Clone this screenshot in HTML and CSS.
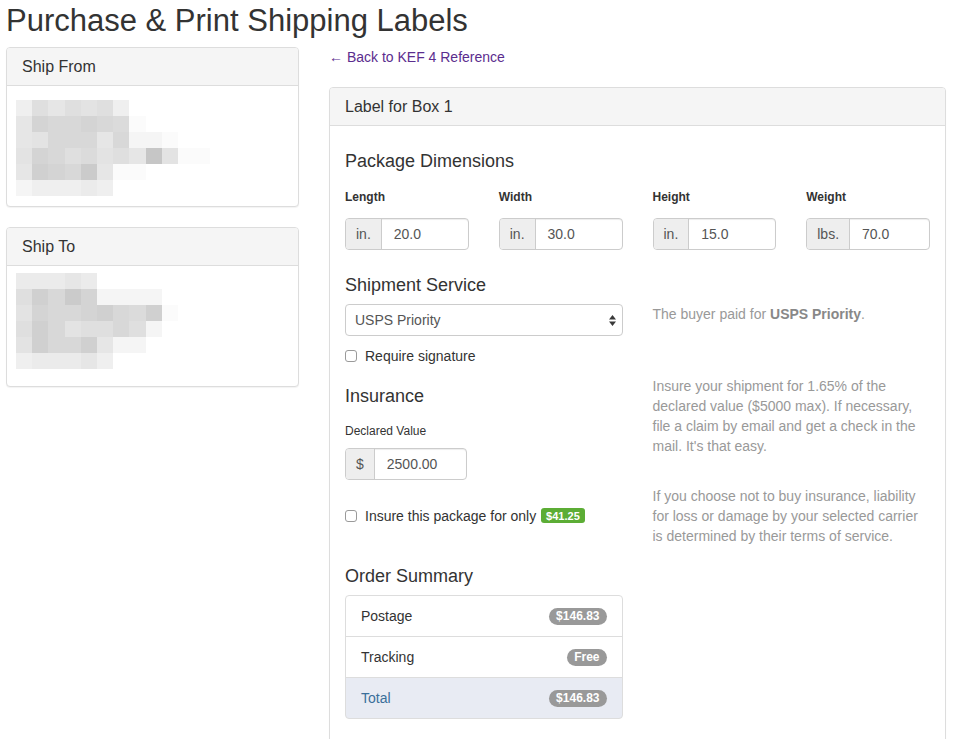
FILE: index.html
```html
<!DOCTYPE html>
<html lang="en">
<head>
<meta charset="utf-8">
<title>Purchase &amp; Print Shipping Labels</title>
<link rel="stylesheet" href="styles.css">
</head>
<body>
<h1 class="page-title">Purchase &amp; Print Shipping Labels</h1>
<div class="layout">
  <aside class="side">
    <section class="panel">
      <div class="panel-heading">Ship From</div>
      <div class="panel-body addr-from">
        <div class="pix">
          <span class="g-f0"></span><span class="g-e0"></span><span class="g-e8"></span><span class="g-e0"></span><span class="g-e4"></span><span class="g-e0"></span><span class="g-f0"></span><span></span><span></span><span></span><span></span><span></span>
          <span class="g-e8"></span><span class="g-d4"></span><span class="g-d8"></span><span class="g-d8"></span><span class="g-d4"></span><span class="g-d8"></span><span class="g-dc"></span><span class="g-fc"></span><span></span><span></span><span></span><span></span>
          <span class="g-e8"></span><span class="g-e4"></span><span class="g-d8"></span><span class="g-d8"></span><span class="g-d8"></span><span class="g-e8"></span><span class="g-d8"></span><span class="g-f6"></span><span class="g-f6"></span><span class="g-fc"></span><span></span><span></span>
          <span class="g-e4"></span><span class="g-d4"></span><span class="g-d8"></span><span class="g-e0"></span><span class="g-dc"></span><span class="g-e4"></span><span class="g-e0"></span><span class="g-e8"></span><span class="g-c8"></span><span class="g-e4"></span><span class="g-fc"></span><span class="g-fc"></span>
          <span class="g-e8"></span><span class="g-d0"></span><span class="g-d4"></span><span class="g-d8"></span><span class="g-cc"></span><span class="g-e8"></span><span class="g-fc"></span><span class="g-fc"></span><span></span><span></span><span></span><span></span>
          <span class="g-f6"></span><span class="g-f0"></span><span class="g-f0"></span><span class="g-f0"></span><span class="g-ec"></span><span class="g-f0"></span><span></span><span></span><span></span><span></span><span></span><span></span>
        </div>
      </div>
    </section>
    <section class="panel">
      <div class="panel-heading">Ship To</div>
      <div class="panel-body addr-to">
        <div class="pix">
          <span class="g-ec"></span><span class="g-ec"></span><span class="g-ec"></span><span class="g-e8"></span><span class="g-ec"></span><span></span><span></span><span></span><span></span><span></span><span></span><span></span>
          <span class="g-e0"></span><span class="g-d0"></span><span class="g-d8"></span><span class="g-cc"></span><span class="g-d4"></span><span class="g-f6"></span><span class="g-f6"></span><span class="g-f6"></span><span class="g-f6"></span><span></span><span></span><span></span>
          <span class="g-e4"></span><span class="g-d4"></span><span class="g-d8"></span><span class="g-d8"></span><span class="g-d4"></span><span class="g-d0"></span><span class="g-d8"></span><span class="g-dc"></span><span class="g-d0"></span><span class="g-fc"></span><span></span><span></span>
          <span class="g-e0"></span><span class="g-d0"></span><span class="g-d8"></span><span class="g-e4"></span><span class="g-e0"></span><span class="g-e0"></span><span class="g-d8"></span><span class="g-e0"></span><span class="g-f6"></span><span></span><span></span><span></span>
          <span class="g-e4"></span><span class="g-d0"></span><span class="g-d8"></span><span class="g-d8"></span><span class="g-d0"></span><span class="g-e8"></span><span class="g-f6"></span><span class="g-f6"></span><span></span><span></span><span></span><span></span>
          <span class="g-f0"></span><span class="g-ec"></span><span class="g-ec"></span><span class="g-ec"></span><span class="g-e8"></span><span class="g-f0"></span><span></span><span></span><span></span><span></span><span></span><span></span>
        </div>
      </div>
    </section>
  </aside>

  <main class="main">
    <a class="back-link" href="#">&larr; Back to KEF 4 Reference</a>
    <section class="panel label-panel">
      <div class="panel-heading">Label for Box 1</div>
      <div class="panel-body form-body">
        <h4 class="section-title first">Package Dimensions</h4>
        <div class="dims">
          <div class="field">
            <div class="field-label">Length</div>
            <div class="input-group"><span class="addon">in.</span><span class="input-value">20.0</span></div>
          </div>
          <div class="field">
            <div class="field-label">Width</div>
            <div class="input-group"><span class="addon">in.</span><span class="input-value">30.0</span></div>
          </div>
          <div class="field">
            <div class="field-label">Height</div>
            <div class="input-group"><span class="addon">in.</span><span class="input-value">15.0</span></div>
          </div>
          <div class="field">
            <div class="field-label">Weight</div>
            <div class="input-group"><span class="addon">lbs.</span><span class="input-value">70.0</span></div>
          </div>
        </div>

        <div class="split">
          <div class="split-left">
            <h4 class="section-title">Shipment Service</h4>
            <div class="select">
              <span>USPS Priority</span>
              <svg class="select-arrows" width="7" height="11" viewBox="0 0 7 11"><path d="M0 4.5 L3.5 0 L7 4.5 Z M0 6.5 L7 6.5 L3.5 11 Z" fill="#3a3a3a"/></svg>
            </div>
            <label class="check-row sig-row"><input type="checkbox" class="check"><span>Require signature</span></label>

            <h4 class="section-title ins-title">Insurance</h4>
            <div class="value-label">Declared Value</div>
            <div class="input-group narrow"><span class="addon">$</span><span class="input-value">2500.00</span></div>
            <label class="check-row ins-row"><input type="checkbox" class="check"><span>Insure this package for only <span class="price-label">$41.25</span></span></label>

            <h4 class="section-title summary-title">Order Summary</h4>
            <ul class="list-group">
              <li class="list-item"><span>Postage</span><span class="badge">$146.83</span></li>
              <li class="list-item"><span>Tracking</span><span class="badge">Free</span></li>
              <li class="list-item total"><span>Total</span><span class="badge">$146.83</span></li>
            </ul>
          </div>
          <div class="split-right">
            <p class="note note-1">The buyer paid for <strong>USPS Priority</strong>.</p>
            <p class="note note-2">Insure your shipment for 1.65% of the declared value ($5000 max). If necessary, file a claim by email and get a check in the mail. It's that easy.</p>
            <p class="note note-3">If you choose not to buy insurance, liability for loss or damage by your selected carrier is determined by their terms of service.</p>
          </div>
        </div>
      </div>
    </section>
  </main>
</div>
</body>
</html>
```
FILE: styles.css
```css
* { box-sizing: border-box; }

body {
  margin: 0;
  padding: 0 6px;
  font-family: "Liberation Sans", Arial, sans-serif;
  font-size: 14px;
  line-height: 20px;
  color: #333;
  background: #fff;
}

.page-title {
  margin: 0;
  height: 40px;
  font-size: 31px;
  line-height: 42px;
  font-weight: normal;
  color: #333;
}

.layout {
  display: flex;
  align-items: flex-start;
  gap: 30px;
  margin-top: 7px;
}

.side { width: 293px; flex: none; }
.main { width: 617px; flex: none; }

.panel {
  background: #fff;
  border: 1px solid #ddd;
  border-radius: 4px;
  box-shadow: 0 1px 1px rgba(0, 0, 0, .05);
  margin-bottom: 20px;
}

.panel-heading {
  background: #f5f5f5;
  border-bottom: 1px solid #ddd;
  border-radius: 3px 3px 0 0;
  padding: 10px 15px;
  font-size: 16px;
  line-height: 17px;
  color: #333;
}

.addr-from { padding: 14px 9px 10px; }
.addr-to { padding: 7px 9px 17px; }

.pix {
  display: grid;
  grid-template-columns: repeat(12, 16.2px);
  grid-auto-rows: 16px;
}

.g-fc { background: #fbfbfb; }
.g-f6 { background: #f5f5f5; }
.g-f0 { background: #efefef; }
.g-ec { background: #ebebeb; }
.g-e8 { background: #e6e6e6; }
.g-e4 { background: #e3e3e3; }
.g-e0 { background: #dfdfdf; }
.g-dc { background: #dbdbdb; }
.g-d8 { background: #d8d8d8; }
.g-d4 { background: #d4d4d4; }
.g-d0 { background: #d0d0d0; }
.g-cc { background: #cbcbcb; }
.g-c8 { background: #c6c6c6; }

.back-link {
  display: block;
  color: #5b2d8e;
  text-decoration: none;
  line-height: 20px;
  margin-bottom: 20px;
}

.label-panel { margin-bottom: 0; }

.form-body { padding: 15px 15px 40px; }

.section-title {
  margin: 25px 0 0;
  font-size: 18px;
  line-height: 20px;
  font-weight: normal;
  color: #333;
}
.section-title.first { margin-top: 10px; }
.ins-title { margin-top: 20px; }
.summary-title { margin-top: 40px; }

.dims {
  display: grid;
  grid-template-columns: repeat(4, 1fr);
  column-gap: 30px;
  margin-top: 16px;
}

.field-label {
  font-size: 12px;
  font-weight: bold;
  line-height: 20px;
  margin-bottom: 11px;
}

.input-group {
  display: flex;
  height: 32px;
  border: 1px solid #ccc;
  border-radius: 4px;
  overflow: hidden;
  box-shadow: inset 0 1px 1px rgba(0, 0, 0, .075);
  font-size: 14px;
}
.input-group.narrow { width: 122px; margin-top: 7px; }

.addon {
  background: #eee;
  color: #555;
  padding: 0 10px;
  border-right: 1px solid #ccc;
  line-height: 30px;
}

.input-value {
  flex: 1;
  padding-left: 12px;
  line-height: 30px;
  color: #555;
}

.split {
  display: grid;
  grid-template-columns: 1fr 1fr;
  column-gap: 30px;
}

.select {
  position: relative;
  margin-top: 9px;
  height: 32px;
  border: 1px solid #ccc;
  border-radius: 4px;
  padding-left: 9px;
  line-height: 30px;
  color: #555;
  background: #fff;
}

.select-arrows {
  position: absolute;
  right: 6px;
  top: 10px;
}

.check-row {
  display: flex;
  align-items: center;
  gap: 8px;
  line-height: 20px;
  color: #333;
}
.sig-row { margin-top: 10px; }
.ins-row { margin-top: 26px; }

.check {
  appearance: none;
  -webkit-appearance: none;
  width: 12px;
  height: 12px;
  margin: 0;
  border: 1px solid #9a9a9a;
  border-radius: 3px;
  background: #fff;
  flex: none;
}

.value-label {
  margin-top: 15px;
  font-size: 12px;
  line-height: 20px;
  color: #333;
}

.price-label {
  display: inline-block;
  margin-left: 1px;
  padding: 2px 5px 1px;
  border-radius: 3px;
  background: #5cad35;
  color: #fff;
  font-size: 11px;
  font-weight: bold;
  line-height: 12px;
  vertical-align: 1px;
}

.list-group {
  list-style: none;
  margin: 9px 0 0;
  padding: 0;
}

.list-item {
  display: flex;
  justify-content: space-between;
  align-items: center;
  padding: 10px 15px;
  border: 1px solid #ddd;
  margin-bottom: -1px;
  line-height: 20px;
  background: #fff;
}
.list-item:first-child { border-radius: 4px 4px 0 0; }
.list-item:last-child { border-radius: 0 0 4px 4px; margin-bottom: 0; }
.list-item.total { background: #e8ebf3; color: #3a6f9a; }

.badge {
  display: inline-block;
  padding: 0 7px;
  border-radius: 9px;
  background: #999;
  color: #fff;
  font-size: 12px;
  font-weight: bold;
  line-height: 17px;
}

.note {
  margin: 0;
  color: #999;
}
.note strong { color: #888; }
.note-1 { margin-top: 54px; }
.note-2 { margin-top: 52px; }
.note-3 { margin-top: 30px; }
```
